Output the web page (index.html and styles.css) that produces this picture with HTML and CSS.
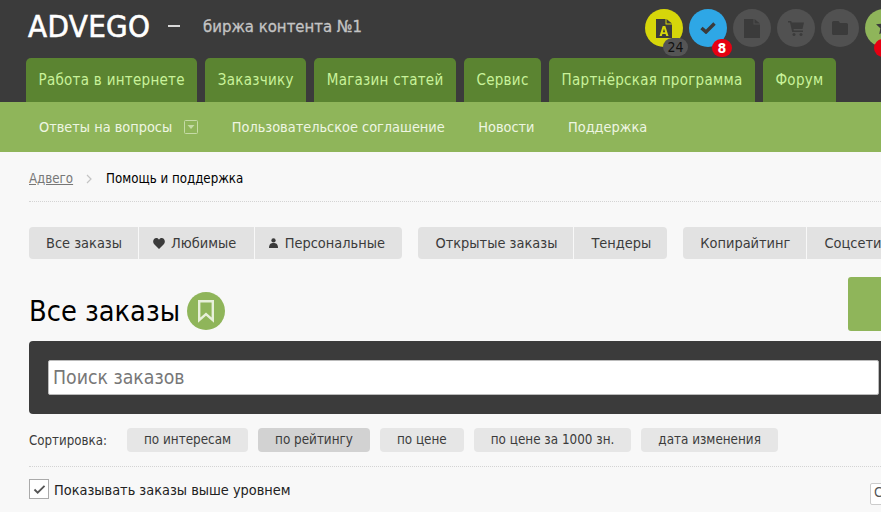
FILE: index.html
```html
<!DOCTYPE html>
<html lang="ru">
<head>
<meta charset="utf-8">
<title>Advego</title>
<link rel="stylesheet" href="styles.css">
</head>
<body>
<div class="page">
  <header class="header">
    <div class="top">
      <div class="brand">
        <span class="logo">ADVEGO</span>
        <span class="dash"></span>
        <span class="slogan">биржа контента №1</span>
      </div>
      <div class="icons">
        <span class="circle c-yellow">
          <svg class="ic" viewBox="0 0 16 19"><path fill="#3b3b3b" d="M0 0h9.500v5.500H16V19H0zM10.500 0L16 4.500h-5.500z"/><path fill="#d6d60a" d="M6.700 7h2.600l3.200 10h-2.300l-.6-2H6.400l-.6 2H3.500zM6.900 13.200h2.200L8 9.500z"/></svg>
          <span class="badge b-gray">24</span>
        </span>
        <span class="circle c-blue">
          <svg class="ic-check" viewBox="0 0 16 12"><path fill="none" stroke="#3b3b3b" stroke-width="3.400" d="M1.500 6l4.500 4L14.500 1.500"/></svg>
          <span class="badge b-red">8</span>
        </span>
        <span class="circle c-gray">
          <svg class="ic-doc" viewBox="0 0 16 19"><path fill="#3b3b3b" d="M0 0h9.500v5.500H16V19H0zM10.500 0L16 4.500h-5.500z"/></svg>
        </span>
        <span class="circle c-gray">
          <svg class="ic-cart" viewBox="0 0 16 15"><path fill="#3b3b3b" d="M0 0h3.200l.5 1.500H16l-1.500 6.500H5.500l.3 1.500H15V11H4.200L2 1.500H0z"/><circle cx="6" cy="13.500" r="1.500" fill="#3b3b3b"/><circle cx="13" cy="13.500" r="1.500" fill="#3b3b3b"/></svg>
        </span>
        <span class="circle c-gray">
          <svg class="ic-folder" viewBox="0 0 16 14"><path fill="#3b3b3b" d="M1.500 0h5l1.500 2h6.500A1.500 1.500 0 0 1 16 3.500v9a1.500 1.500 0 0 1-1.500 1.500h-13A1.500 1.500 0 0 1 0 12.500v-11A1.500 1.500 0 0 1 1.500 0z"/></svg>
        </span>
        <span class="circle c-green">
          <svg class="ic-star" viewBox="0 0 20 20"><path fill="#3b3b3b" d="M10 0l3 6.500 7 .9-5.100 4.800 1.300 7L10 15.800l-6.200 3.400 1.300-7L0 7.400l7-.9z"/></svg>
          <span class="badge b-red b-cut"></span>
        </span>
      </div>
    </div>
    <nav class="tabs">
      <a class="tab">Работа в интернете</a>
      <a class="tab">Заказчику</a>
      <a class="tab">Магазин статей</a>
      <a class="tab">Сервис</a>
      <a class="tab">Партнёрская программа</a>
      <a class="tab">Форум</a>
    </nav>
  </header>
  <nav class="subnav">
    <a class="sub sub-drop">Ответы на вопросы
      <svg class="drop" viewBox="0 0 14 14"><rect x=".5" y=".5" width="13" height="13" rx="1" fill="none" stroke="#c5dba6"/><path fill="#c5dba6" d="M3.500 5h7L7 9z"/></svg>
    </a>
    <a class="sub">Пользовательское соглашение</a>
    <a class="sub">Новости</a>
    <a class="sub">Поддержка</a>
  </nav>
  <main class="content">
    <div class="crumbs">
      <a class="crumb-link">Адвего</a>
      <svg class="crumb-sep" viewBox="0 0 6 10"><path fill="none" stroke="#c4c4c4" stroke-width="1.200" d="M1 1l4 4-4 4"/></svg>
      <span>Помощь и поддержка</span>
    </div>
    <div class="filters">
      <div class="group">
        <a class="seg">Все заказы</a>
        <a class="seg seg-icon"><svg class="seg-ic" viewBox="0 0 12 11"><path fill="#3b3b3b" d="M6 11L1 6C-1 3.500.8 0 3.300 0 4.500 0 5.500.7 6 1.700 6.500.7 7.500 0 8.700 0 11.200 0 13 3.500 11 6z"/></svg>Любимые</a>
        <a class="seg seg-icon"><svg class="seg-ic seg-user" viewBox="0 0 10 11"><circle cx="5" cy="2.600" r="2.400" fill="#3b3b3b"/><path fill="#3b3b3b" d="M0 11c0-4 2-5.500 5-5.500s5 1.500 5 5.500z"/></svg>Персональные</a>
      </div>
      <div class="group">
        <a class="seg">Открытые заказы</a>
        <a class="seg">Тендеры</a>
      </div>
      <div class="group">
        <a class="seg">Копирайтинг</a>
        <a class="seg">Соцсети</a>
      </div>
    </div>
    <div class="title-row">
      <h1 class="title">Все заказы</h1>
      <span class="title-badge">
        <svg class="bookmark" viewBox="0 0 16 23"><path fill="none" stroke="#e8f0da" stroke-width="2.400" d="M1.200 1.200h13.600v19l-6.800-6-6.800 6z"/></svg>
      </span>
      <span class="action"></span>
    </div>
    <div class="search">
      <div class="search-input">Поиск заказов</div>
    </div>
    <div class="sort">
      <span class="sort-label">Сортировка:</span>
      <a class="pill">по интересам</a>
      <a class="pill pill-on">по рейтингу</a>
      <a class="pill">по цене</a>
      <a class="pill">по цене за 1000 зн.</a>
      <a class="pill">дата изменения</a>
    </div>
    <div class="options">
      <label class="check">
        <span class="box"><svg class="tick" viewBox="0 0 14 12"><path fill="none" stroke="#555" stroke-width="2" d="M1.500 6l3.500 3.500L12.500 2"/></svg></span>
        <span class="check-text">Показывать заказы выше уровнем</span>
      </label>
      <span class="mini">С</span>
    </div>
  </main>
</div>
</body>
</html>
```
FILE: styles.css
```css
* { box-sizing: border-box; }
html, body { margin: 0; padding: 0; overflow: hidden; height: 512px; background: #f8f8f8; }
body { font-family: "DejaVu Sans", sans-serif; font-stretch: condensed; color: #3b3b3b; }
a { color: inherit; text-decoration: none; }

.page { width: 881px; height: 512px; overflow: hidden; }
.page > * { width: 1100px; }

.header { background: #3b3b3b; height: 102px; padding-left: 26px; display: flex; flex-direction: column; }
.top { height: 58px; display: flex; }
.brand { width: 619px; display: flex; align-items: center; height: 52px; }
.logo { font-size: 31px; color: #fff; width: 142px; padding-left: 2px; letter-spacing: .35px; -webkit-text-stroke: .6px #fff; }
.dash { width: 12px; height: 2px; background: #d8d8d8; margin-right: 23px; }
.slogan { font-size: 16.6px; color: #c4c4c4; -webkit-text-stroke: .3px #c4c4c4; }

.icons { display: flex; gap: 6px; padding-top: 9px; }
.circle { position: relative; width: 38px; height: 38px; border-radius: 50%; display: flex; align-items: center; justify-content: center; flex: none; }
.c-yellow { background: #d6d60a; }
.c-blue { background: #2ea7e6; }
.c-gray { background: #515151; }
.c-green { background: #8fb55a; }
.ic, .ic-doc { width: 16px; height: 19px; }
.ic-check { width: 16px; height: 12px; }
.ic-cart { width: 16px; height: 15px; }
.ic-folder { width: 16px; height: 14px; }
.ic-star { width: 17px; height: 17px; margin-top: -4px; }
.badge { position: absolute; height: 18px; border-radius: 9px; font-size: 14px; line-height: 18px; text-align: center; }
.b-gray { left: 18px; top: 29px; width: 25px; background: #555; color: #111; }
.b-red { left: 23px; top: 30px; width: 20px; background: #e60012; color: #fff; font-weight: 700; }
.b-cut { left: 9px; }

.tabs { display: flex; gap: 8px; height: 44px; }
.tab { background: #5b8431; color: #c9f29a; font-size: 15px; letter-spacing: .28px; padding: 0 12.5px; line-height: 44px; border-radius: 5px 5px 0 0; }

.subnav { background: #8fb55a; height: 50px; padding-left: 39px; display: flex; align-items: center; gap: 33.5px; }
.sub { color: #eef5e2; font-size: 14.4px; display: flex; align-items: center; }
.drop { width: 14px; height: 14px; margin-left: 12px; }

.content { padding: 0 29px; }
.crumbs { height: 50px; padding-top: 4px; border-bottom: 1px dotted #d4d4d4; display: flex; align-items: center; gap: 13px; font-size: 13.2px; color: #000; }
.crumb-link { color: #777; text-decoration: underline; }
.crumb-sep { width: 6px; height: 10px; margin-right: 1px; }

.filters { display: flex; gap: 16px; margin-top: 25px; }
.group { display: flex; background: #e2e2e2; border-radius: 4px; height: 32px; }
.seg { display: flex; align-items: center; padding: 0 16px 0 17px; font-size: 14.45px; color: #3b3b3b; border-left: 1px solid #f8f8f8; }
.seg:first-child { border-left: 0; }
.seg-icon { padding: 0 17.5px 0 14px; }
.seg-ic { width: 12px; height: 11px; margin-right: 6px; }
.seg-user { width: 9px; height: 10px; margin-right: 7px; }

.title-row { display: flex; align-items: center; height: 54px; padding-top: 14px; margin-top: 18px; position: relative; }
.title { margin: 0; font-size: 28.7px; font-weight: 400; color: #000; }
.title-badge { margin-left: 7px; width: 38px; height: 38px; border-radius: 50%; background: #8fb55a; display: flex; align-items: center; justify-content: center; }
.bookmark { width: 16px; height: 23px; }
.action { position: absolute; left: 819px; top: 0; width: 120px; height: 54px; background: #8fb55a; border-radius: 3px; }

.search { background: #3b3b3b; margin-top: 10px; height: 73px; padding: 19px; border-radius: 4px; }
.search-input { width: 831px; height: 35px; background: #fff; border: 1px solid #bbb; border-radius: 2px; font-size: 19.3px; line-height: 33px; padding-left: 4px; color: #777; }

.sort { display: flex; align-items: center; margin-top: 14px; height: 24px; gap: 10px; }
.sort-label { font-size: 13.2px; width: 88px; color: #3b3b3b; }
.pill { height: 24px; line-height: 24px; padding: 0 17px; background: #e6e6e6; border-radius: 4px; font-size: 13.35px; color: #3b3b3b; }
.pill-on { background: #d2d2d2; }

.options { display: flex; margin-top: 14px; border-top: 1px dotted #d4d4d4; padding-top: 12px; position: relative; }
.check { display: flex; align-items: center; gap: 5px; font-size: 14.4px; color: #222; }
.check-text { position: relative; top: 1px; }
.box { width: 20px; height: 20px; border: 1px solid #aaa; background: #fff; display: flex; align-items: center; justify-content: center; }
.tick { width: 13px; height: 11px; }
.mini { position: absolute; left: 841px; top: 16px; width: 40px; height: 22px; border: 1px solid #ccc; background: #fff; font-size: 14px; padding-left: 3px; color: #555; border-radius: 2px; }
```
